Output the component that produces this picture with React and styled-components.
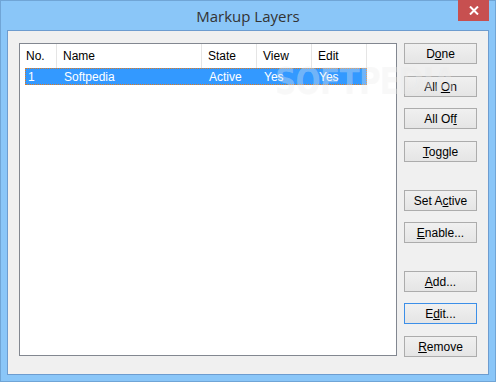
import React from "react";
import styled, { createGlobalStyle } from "styled-components";

const GlobalStyle = createGlobalStyle`
  html, body {
    margin: 0;
    padding: 0;
    background: #8ac6f8;
  }
  body {
    font-family: "Liberation Sans", Arial, sans-serif;
    font-size: 12px;
    color: #000;
  }
`;

const Window = styled.div`
  position: relative;
  width: 496px;
  height: 382px;
  box-sizing: border-box;
  background: #8ac6f8;
  border: 1px solid #70a5d6;
  display: flex;
  flex-direction: column;
`;

const TitleBar = styled.div`
  height: 29px;
  display: flex;
  align-items: center;
  justify-content: center;
  position: relative;
  font-family: "Open Sans", "Noto Sans", sans-serif;
  font-size: 15px;
  color: #333;
`;

const CloseButton = styled.div`
  position: absolute;
  top: -1px;
  right: 6px;
  width: 31px;
  height: 21px;
  background: #c75050;
  display: flex;
  align-items: center;
  justify-content: center;
`;

const Client = styled.div`
  margin: 0 6px 6px 6px;
  flex: 1;
  border: 1px solid #6d9ccf;
  background: #f0f0f0;
  display: flex;
  padding: 12px 10px 0 11px;
  gap: 7px;
`;

const List = styled.div`
  width: 376px;
  height: 311px;
  background: #fff;
  border: 1px solid #828790;
  overflow: hidden;
`;

const HeaderRow = styled.div`
  display: grid;
  grid-template-columns: 37px 145px 55px 55px 55px;
  height: 24px;
`;

const HeaderCell = styled.div`
  border-right: 1px solid #e5e5e5;
  padding-left: 6px;
  display: flex;
  align-items: center;
`;

const Row = styled.div`
  margin-left: 5px;
  display: grid;
  grid-template-columns: 32px 145px 55px 55px 55px;
  height: 15px;
  background: #3399ff;
  color: #fff;
  border: 1px dotted #e07a1f;
  width: 340px;
  box-sizing: content-box;
`;

const Cell = styled.div`
  padding-left: ${(p) => p.$pad || 6}px;
  display: flex;
  align-items: center;
  white-space: nowrap;
`;

const Watermark = styled.div`
  position: absolute;
  left: 274px;
  top: 58px;
  font-family: "DejaVu Sans", sans-serif;
  font-weight: bold;
  font-size: 38px;
  letter-spacing: -1px;
  transform: scaleX(0.78);
  transform-origin: left top;
  color: rgba(255, 255, 255, 0.32);
  text-shadow: 0 0 1px rgba(0, 0, 0, 0.04);
  pointer-events: none;
  white-space: nowrap;
`;

const Buttons = styled.div`
  display: flex;
  flex-direction: column;
`;

const Button = styled.button`
  width: 73px;
  height: 21px;
  margin-top: ${(p) => p.$top || 0}px;
  padding: 0;
  box-sizing: border-box;
  border: 1px solid ${(p) => (p.$default ? "#3c8fe8" : "#acacac")};
  background: linear-gradient(#f0f0f0, #e5e5e5);
  font-family: "Liberation Sans", Arial, sans-serif;
  font-size: 12px;
  color: #000;
  u {
    text-decoration: underline;
    text-underline-offset: 1px;
  }
`;

export default function App() {
  return (
    <>
      <GlobalStyle />
      <Window>
        <TitleBar>
          Markup Layers
          <CloseButton>
            <svg width="10" height="9" viewBox="0 0 10 9">
              <path d="M1 0.5 L9 8.5 M9 0.5 L1 8.5" stroke="#fff" strokeWidth="2" />
            </svg>
          </CloseButton>
        </TitleBar>
        <Client>
          <List>
            <HeaderRow>
              <HeaderCell>No.</HeaderCell>
              <HeaderCell>Name</HeaderCell>
              <HeaderCell>State</HeaderCell>
              <HeaderCell>View</HeaderCell>
              <HeaderCell>Edit</HeaderCell>
            </HeaderRow>
            <Row>
              <Cell $pad={2}>1</Cell>
              <Cell>Softpedia</Cell>
              <Cell>Active</Cell>
              <Cell>Yes</Cell>
              <Cell>Yes</Cell>
            </Row>
          </List>
          <Buttons>
            <Button>D<u>o</u>ne</Button>
            <Button $top={12}>All <u>O</u>n</Button>
            <Button $top={11}>All Of<u>f</u></Button>
            <Button $top={12}><u>T</u>oggle</Button>
            <Button $top={28}>Set A<u>c</u>tive</Button>
            <Button $top={11}><u>E</u>nable...</Button>
            <Button $top={28}><u>A</u>dd...</Button>
            <Button $top={11} $default>E<u>d</u>it...</Button>
            <Button $top={12}><u>R</u>emove</Button>
          </Buttons>
        </Client>
        <Watermark>SOFTPEDIA</Watermark>
      </Window>
    </>
  );
}
